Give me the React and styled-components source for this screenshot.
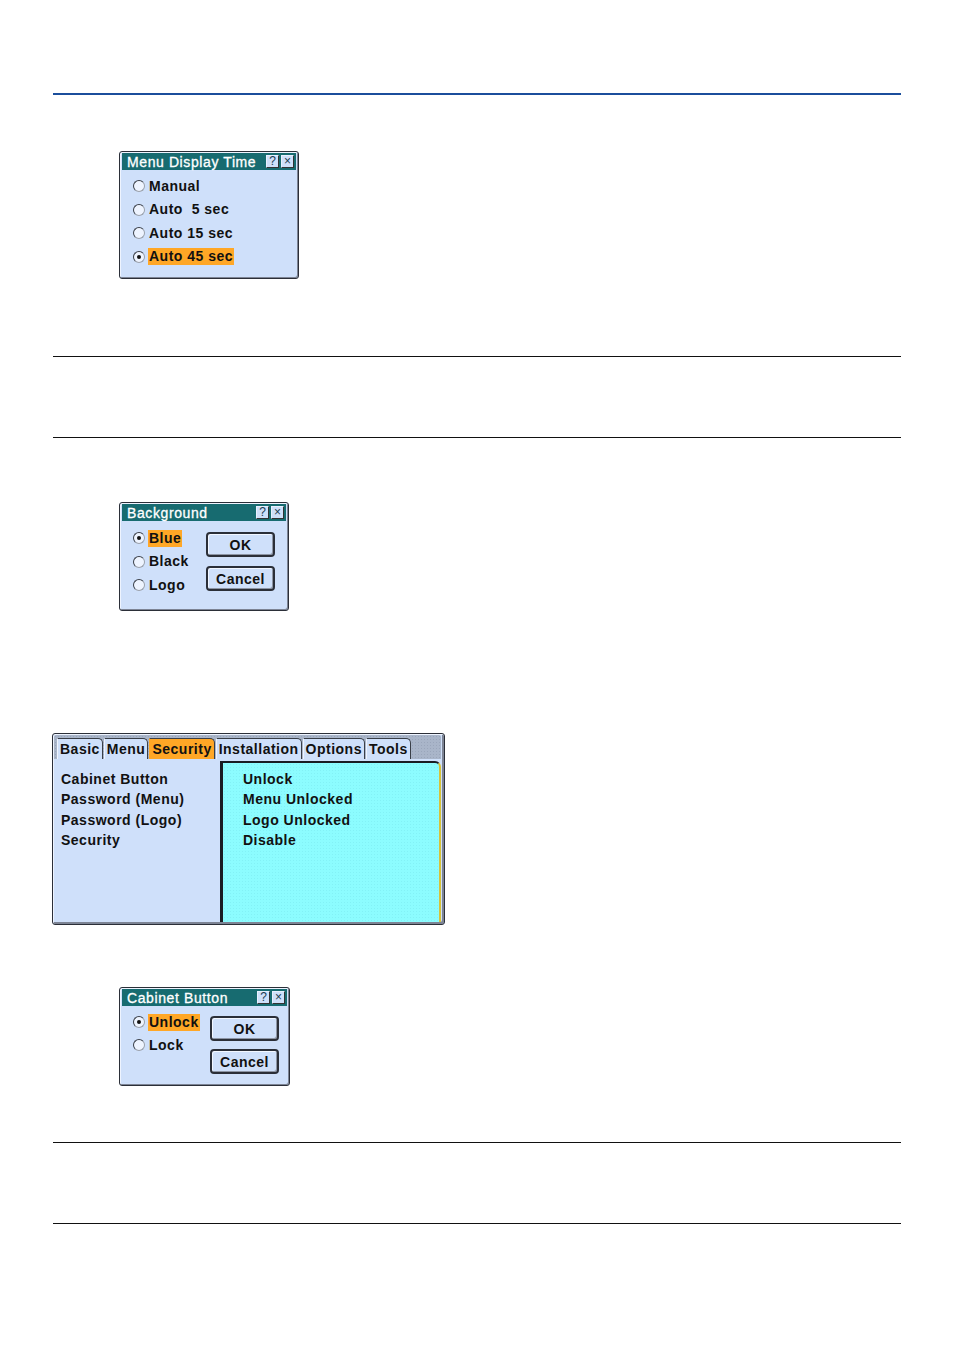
import React from "react";
import styled, { createGlobalStyle } from "styled-components";

const GlobalStyle = createGlobalStyle`
  html, body {
    margin: 0;
    padding: 0;
    background: #ffffff;
  }
  body {
    font-family: "Liberation Sans", Arial, sans-serif;
  }
`;

const Page = styled.div`
  width: 954px;
  height: 1348px;
  padding: 93px 53px 0 53px;
  box-sizing: border-box;
  display: flex;
  flex-direction: column;
`;

const Rule = styled.div`
  height: ${(p) => (p.$blue ? "2px" : "1px")};
  background: ${(p) => (p.$blue ? "#1b4e9c" : "#111")};
  margin-top: ${(p) => p.$top || 0}px;
`;

const Indent = styled.div`
  margin-top: ${(p) => p.$top}px;
  padding-left: ${(p) => p.$left}px;
  display: flex;
`;

const Dialog = styled.div`
  width: ${(p) => p.$w}px;
  height: ${(p) => p.$h}px;
  box-sizing: border-box;
  background: #cfe0fa;
  border: 1px solid #2b2f38;
  border-radius: 3px;
  box-shadow: inset 1px 1px 0 #eef4ff, inset -1px -1px 0 #7d8494;
  padding: 1px 2px 2px 2px;
  display: flex;
  flex-direction: column;
  font-size: 14px;
  font-weight: bold;
  letter-spacing: 0.5px;
  color: #111;
`;

const TitleBar = styled.div`
  height: 17px;
  background: #176b70;
  color: #ffffff;
  display: flex;
  align-items: center;
  padding: 0 2px 0 5px;
  font-weight: normal;
  font-size: 14px;
  letter-spacing: 0.6px;
  -webkit-text-stroke: 0.3px #fff;
`;

const TitleText = styled.span`
  flex: 1;
  white-space: nowrap;
`;

const TitleBtn = styled.span`
  width: 13px;
  height: 13px;
  box-sizing: border-box;
  margin-left: 2px;
  background: #cfe0fa;
  border: 1px solid #e8f0ff;
  border-right-color: #333;
  border-bottom-color: #333;
  color: #1b3b50;
  font-size: 12px;
  line-height: 11px;
  text-align: center;
  font-weight: normal;
  letter-spacing: 0;
  -webkit-text-stroke: 0;
`;

const DialogBody = styled.div`
  flex: 1;
  display: flex;
  padding: ${(p) => p.$pad || "5px 0 0 11px"};
`;

const RadioList = styled.div`
  display: flex;
  flex-direction: column;
  gap: ${(p) => p.$gap}px;
`;

const RadioRow = styled.div`
  display: flex;
  align-items: center;
  height: 18px;
  white-space: nowrap;
`;

const RadioDot = styled.span`
  width: 12px;
  height: 12px;
  box-sizing: border-box;
  border-radius: 50%;
  background: #eef4ff;
  border: 1px solid #9aa1ac;
  border-top-color: #3a3f48;
  border-left-color: #3a3f48;
  margin-right: 3px;
  display: flex;
  align-items: center;
  justify-content: center;
  &::after {
    content: "";
    width: 4px;
    height: 4px;
    border-radius: 50%;
    background: ${(p) => (p.$on ? "#111" : "transparent")};
  }
`;

const Label = styled.span`
  background: ${(p) => (p.$on ? "#ffa726" : "transparent")};
  padding: 0 1px;
  line-height: 17px;
`;

const ButtonCol = styled.div`
  margin-left: auto;
  display: flex;
  flex-direction: column;
  gap: ${(p) => p.$gap}px;
  padding-top: ${(p) => p.$top}px;
  padding-right: ${(p) => p.$right}px;
`;

const Button = styled.div`
  width: 69px;
  height: 25px;
  box-sizing: border-box;
  border: 2px solid #2b2f38;
  border-radius: 4px;
  background: #cfe0fa;
  box-shadow: inset 1px 1px 0 #f2f7ff, inset -1px -1px 0 #8d95a4;
  display: flex;
  align-items: center;
  justify-content: center;
`;

const Window = styled.div`
  width: 393px;
  height: 192px;
  box-sizing: border-box;
  border: 1px solid #2b2f38;
  border-radius: 3px;
  background: #cfe0fa;
  box-shadow: inset 1px 1px 0 #eef4ff, inset -2px -2px 0 #7d8494;
  padding: 1px 3px 2px 1px;
  display: flex;
  flex-direction: column;
  font-size: 14px;
  font-weight: bold;
  letter-spacing: 0.5px;
  color: #111;
  margin-left: -1px;
`;

const TabBar = styled.div`
  height: 24px;
  display: flex;
  align-items: flex-end;
  padding-left: 3px;
  background-color: #a9b5c9;
  background-image: radial-gradient(#9aa6bb 0.6px, transparent 0.7px);
  background-size: 3px 3px;
  border-radius: 2px 2px 0 0;
`;

const Tab = styled.div`
  height: 21px;
  box-sizing: border-box;
  padding: 0 ${(p) => p.$px || 2}px;
  display: flex;
  align-items: center;
  background: ${(p) => (p.$active ? "#ffa726" : "#cfe0fa")};
  border: 1px solid #3a3f48;
  border-bottom: none;
  border-left-color: ${(p) => (p.$active ? "#ffa726" : "#eef4ff")};
  border-radius: 0 5px 0 0;
  margin-right: 1px;
  white-space: nowrap;
`;

const TabBody = styled.div`
  flex: 1;
  display: flex;
`;

const SideList = styled.div`
  width: 166px;
  box-sizing: border-box;
  padding: 10px 0 0 7px;
  display: flex;
  flex-direction: column;
`;

const Item = styled.div`
  height: 20.4px;
  line-height: 20px;
  white-space: nowrap;
`;

const ValuePanel = styled.div`
  flex: 1;
  margin-top: 2px;
  background-color: #8cfcff;
  background-image: radial-gradient(#82f1f6 0.7px, transparent 0.8px);
  background-size: 3px 3px;
  border-left: 3px solid #1a1d24;
  border-top: 2px solid #1a1d24;
  border-right: 2px solid #d6c23a;
  border-radius: 0 6px 0 0;
  padding: 6px 0 0 20px;
  display: flex;
  flex-direction: column;
`;

function RadioOption({ on, children }) {
  return (
    <RadioRow>
      <RadioDot $on={on} />
      <Label $on={on}>{children}</Label>
    </RadioRow>
  );
}

function Title({ children }) {
  return (
    <TitleBar>
      <TitleText>{children}</TitleText>
      <TitleBtn>?</TitleBtn>
      <TitleBtn>×</TitleBtn>
    </TitleBar>
  );
}

export default function App() {
  return (
    <>
      <GlobalStyle />
      <Page>
        <Rule $blue />

        <Indent $top={56} $left={66}>
          <Dialog $w={180} $h={128}>
            <Title>Menu Display Time</Title>
            <DialogBody $pad="7px 0 0 11px">
              <RadioList $gap={5.5}>
                <RadioOption>Manual</RadioOption>
                <RadioOption>Auto&nbsp;&nbsp;5 sec</RadioOption>
                <RadioOption>Auto 15 sec</RadioOption>
                <RadioOption on>Auto 45 sec</RadioOption>
              </RadioList>
            </DialogBody>
          </Dialog>
        </Indent>

        <Rule $top={77} />
        <Rule $top={80} />

        <Indent $top={64} $left={66}>
          <Dialog $w={170} $h={109}>
            <Title>Background</Title>
            <DialogBody $pad="8px 0 0 11px">
              <RadioList $gap={5.5}>
                <RadioOption on>Blue</RadioOption>
                <RadioOption>Black</RadioOption>
                <RadioOption>Logo</RadioOption>
              </RadioList>
              <ButtonCol $gap={9} $top={3} $right={11}>
                <Button>OK</Button>
                <Button>Cancel</Button>
              </ButtonCol>
            </DialogBody>
          </Dialog>
        </Indent>

        <Indent $top={122} $left={0}>
          <Window>
            <TabBar>
              <Tab>Basic</Tab>
              <Tab>Menu</Tab>
              <Tab $active>Security</Tab>
              <Tab>Installation</Tab>
              <Tab>Options</Tab>
              <Tab>Tools</Tab>
            </TabBar>
            <TabBody>
              <SideList>
                <Item>Cabinet Button</Item>
                <Item>Password (Menu)</Item>
                <Item>Password (Logo)</Item>
                <Item>Security</Item>
              </SideList>
              <ValuePanel>
                <Item>Unlock</Item>
                <Item>Menu Unlocked</Item>
                <Item>Logo Unlocked</Item>
                <Item>Disable</Item>
              </ValuePanel>
            </TabBody>
          </Window>
        </Indent>

        <Indent $top={62} $left={66}>
          <Dialog $w={171} $h={99}>
            <Title>Cabinet Button</Title>
            <DialogBody $pad="7px 0 0 11px">
              <RadioList $gap={5}>
                <RadioOption on>Unlock</RadioOption>
                <RadioOption>Lock</RadioOption>
              </RadioList>
              <ButtonCol $gap={8} $top={3} $right={8}>
                <Button>OK</Button>
                <Button>Cancel</Button>
              </ButtonCol>
            </DialogBody>
          </Dialog>
        </Indent>

        <Rule $top={56} />
        <Rule $top={80} />
      </Page>
    </>
  );
}
